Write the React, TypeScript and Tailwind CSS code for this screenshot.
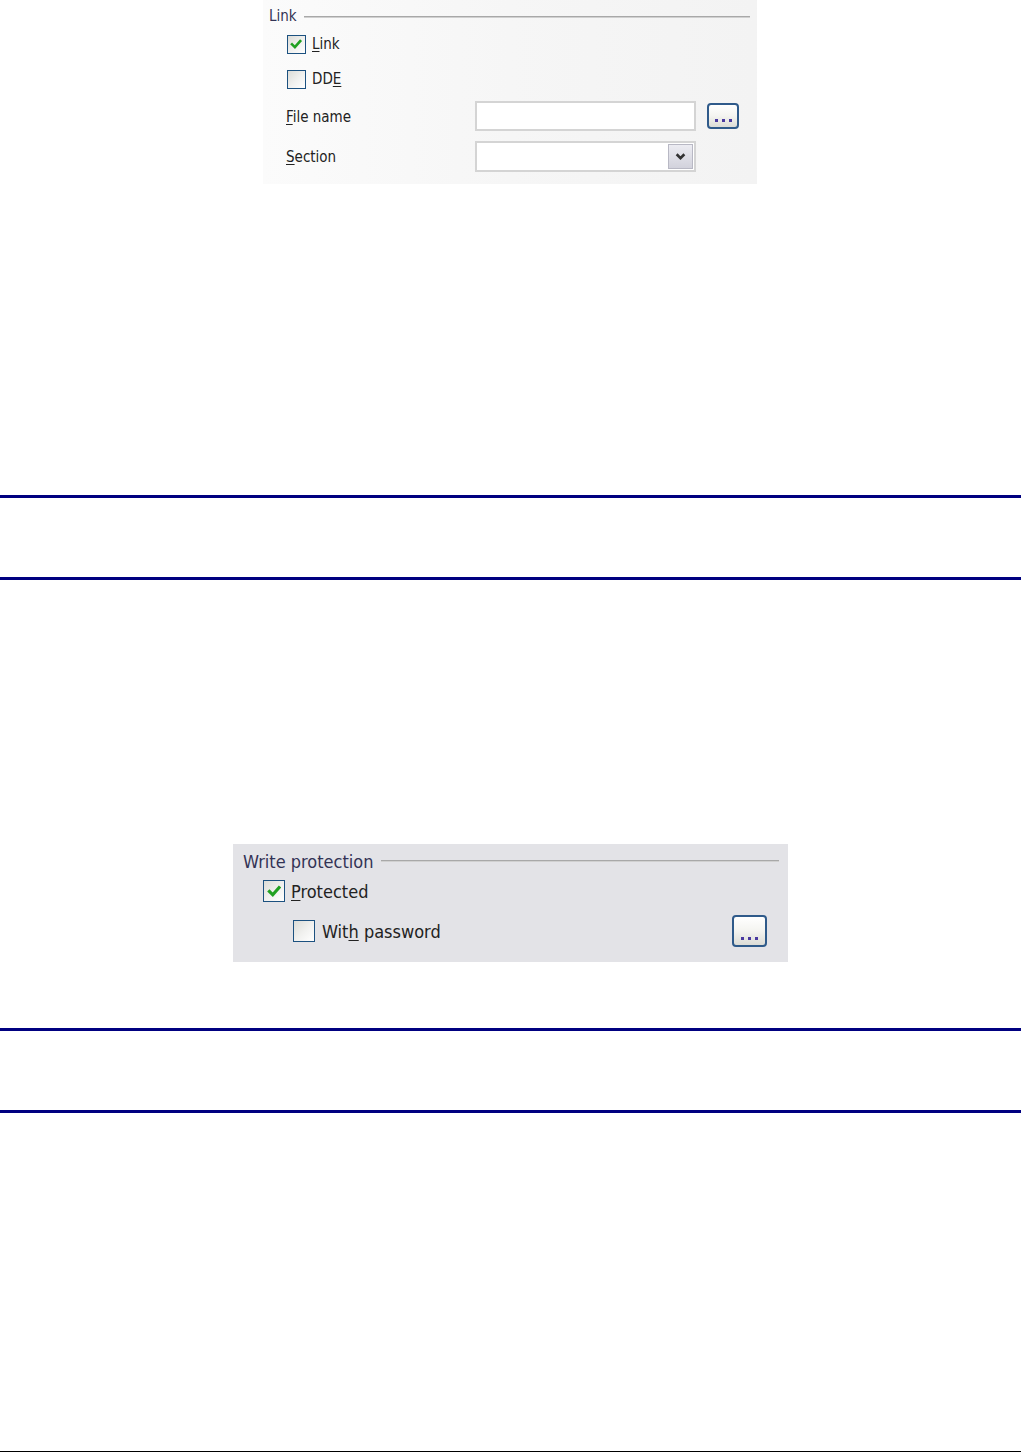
import React from 'react';

const font = { fontFamily: 'Tahoma, "DejaVu Sans Condensed", "DejaVu Sans", sans-serif' };

const Check = ({ checked, size }: { checked?: boolean; size: string }) => (
  <span
    className={`${size} shrink-0 border-[1.5px] border-[#1c5180] bg-gradient-to-br from-[#dcdcd7] via-[#f0f0ee] to-white flex items-center justify-center`}
  >
    {checked && (
      <svg viewBox="0 0 12 12" className="w-[72%] h-[72%]">
        <path d="M2 6.2 L4.8 9 L10 3" fill="none" stroke="#21a121" strokeWidth="2.6" strokeLinecap="square" />
      </svg>
    )}
  </span>
);

const DotsButton = ({ size }: { size: string }) => (
  <span
    className={`${size} rounded-[4px] border-2 border-[#2f5a8a] bg-gradient-to-b from-white via-[#f4f4f0] to-[#dcdcd6] flex items-end justify-center gap-[4px] pb-[5px]`}
  >
    <span className="w-[3px] h-[3px] bg-[#4a3aa0]" />
    <span className="w-[3px] h-[3px] bg-[#4a3aa0]" />
    <span className="w-[3px] h-[3px] bg-[#4a3aa0]" />
  </span>
);

const U = ({ children }: { children: React.ReactNode }) => <span className="underline underline-offset-2">{children}</span>;

const Legend = ({ title, className }: { title: string; className: string }) => (
  <div className={`flex items-center ${className}`}>
    <span className="text-[#333355]">{title}</span>
    <span className="flex-1 ml-[7px] h-[2px] border-t border-[#a8a8a8] border-b-white bg-[#d0d0d0]" />
  </div>
);

const Rule = () => <div className="h-[3px] bg-[#000080]" />;

const App = () => {
  return (
    <div className="w-[1021px] h-[1453px] bg-white flex flex-col" style={font}>
      <div className="ml-[263px] w-[494px] h-[184px] bg-gradient-to-r from-[#fbfbfb] via-[#f6f6f6] to-[#f3f3f3] text-[15px] text-[#222] flex flex-col">
        <Legend title="Link" className="pl-[6px] pr-[7px] h-[32px] pt-[1px]" />
        <div className="flex items-center h-[24px] pl-[24px] gap-[6px]">
          <Check checked size="w-[19px] h-[19px]" />
          <span><U>L</U>ink</span>
        </div>
        <div className="flex items-center h-[24px] pl-[24px] mt-[11px] gap-[6px]">
          <Check size="w-[19px] h-[19px]" />
          <span>DD<U>E</U></span>
        </div>
        <div className="flex items-start h-[30px] mt-[10px]">
          <span className="w-[212px] pl-[23px] pt-[5px]"><U>F</U>ile name</span>
          <span className="w-[221px] h-[30px] border-2 border-[#d4d4d4] bg-white" />
          <span className="ml-[11px] mt-[2px]"><DotsButton size="w-[32px] h-[26px]" /></span>
        </div>
        <div className="flex items-start h-[31px] mt-[10px]">
          <span className="w-[212px] pl-[23px] pt-[5px]"><U>S</U>ection</span>
          <span className="w-[221px] h-[31px] border-2 border-[#d4d4d4] bg-white flex items-center justify-end pr-[1px]">
            <span className="w-[25px] h-[25px] border border-[#b8b8c4] bg-gradient-to-b from-[#ececf2] to-[#d2d2dc] flex items-center justify-center">
              <svg viewBox="0 0 10 10" className="w-[11px] h-[11px]">
                <path d="M1.5 3 L5 6.5 L8.5 3" fill="none" stroke="#333" strokeWidth="2.4" />
              </svg>
            </span>
          </span>
        </div>
      </div>

      <div className="mt-[311px]"><Rule /></div>
      <div className="mt-[79px]"><Rule /></div>

      <div className="mt-[264px] ml-[233px] w-[555px] h-[118px] bg-[#e3e3e7] text-[18px] text-[#222] flex flex-col">
        <Legend title="Write protection" className="pl-[10px] pr-[9px] h-[33px] pt-[1px]" />
        <div className="flex items-center h-[28px] pl-[30px] gap-[6px]">
          <Check checked size="w-[22px] h-[22px]" />
          <span><U>P</U>rotected</span>
        </div>
        <div className="flex items-center h-[34px] pl-[60px] pr-[21px] mt-[9px] gap-[7px]">
          <Check size="w-[22px] h-[22px]" />
          <span className="flex-1">Wit<U>h</U> password</span>
          <DotsButton size="w-[35px] h-[32px]" />
        </div>
      </div>

      <div className="mt-[66px]"><Rule /></div>
      <div className="mt-[79px]"><Rule /></div>

      <div className="mt-[338px] h-px bg-black" />
    </div>
  );
};

export default App;
